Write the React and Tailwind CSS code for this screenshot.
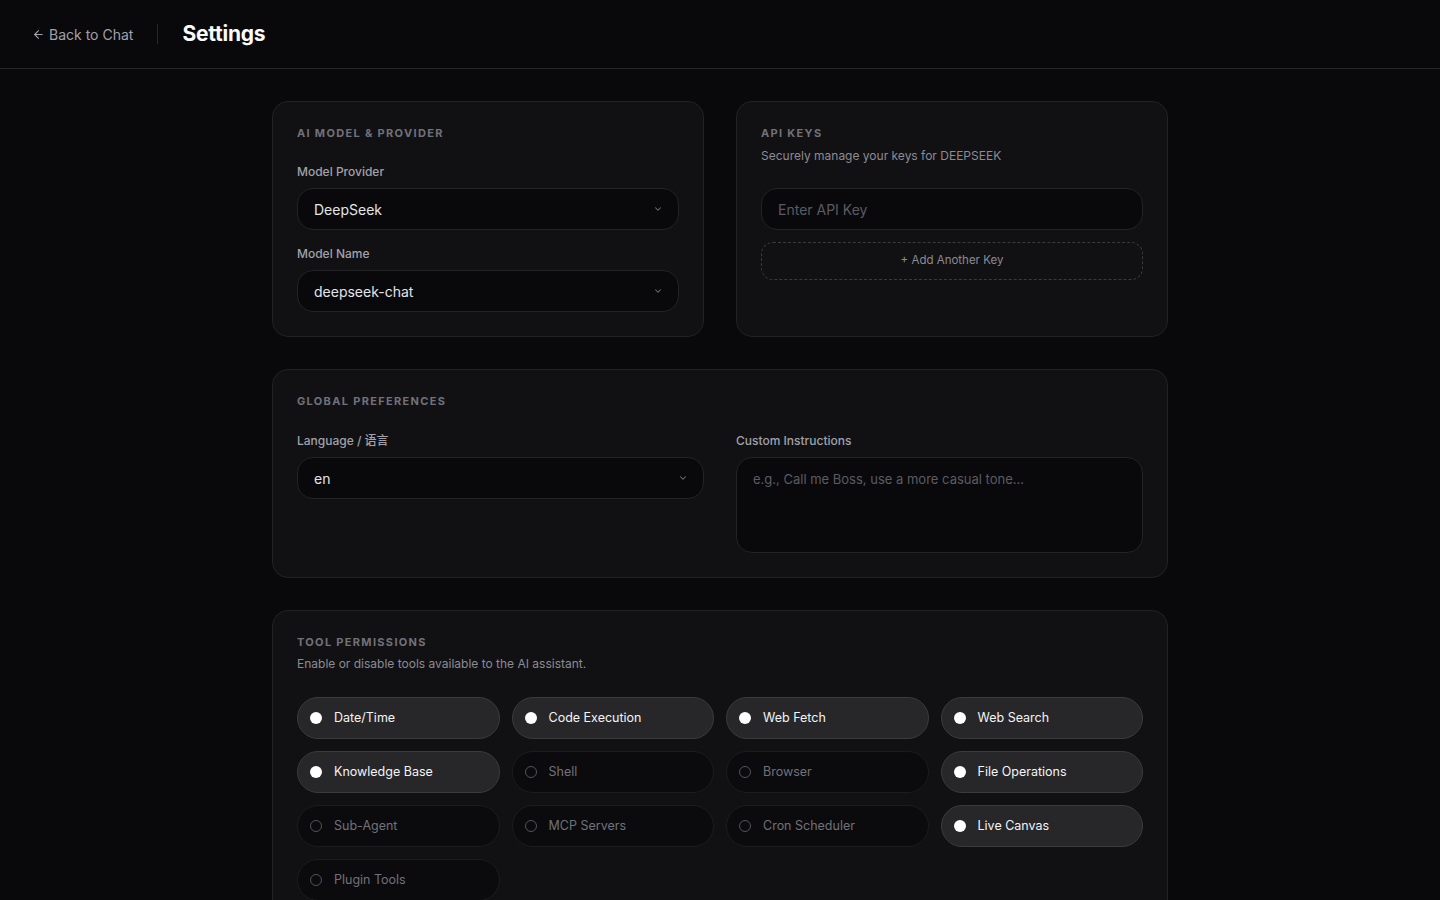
import React from "react";

const font = { fontFamily: "Inter, 'Noto Sans CJK SC', sans-serif" };

function Chevron() {
  return (
    <svg width="10" height="10" viewBox="0 0 24 24" fill="none" stroke="#71717a" strokeWidth="2.5" strokeLinecap="round" strokeLinejoin="round">
      <path d="m6 9 6 6 6-6" />
    </svg>
  );
}

function Select({ value }) {
  return (
    <div className="flex h-[42px] items-center justify-between rounded-2xl border border-[#232326] bg-[#09090b] pl-4 pr-[15px] text-[14px] text-[#e4e4e7]">
      <span>{value}</span>
      <Chevron />
    </div>
  );
}

function Heading({ children }) {
  return <h2 className="text-[11px] font-bold uppercase leading-4 tracking-[0.12em] text-[#71717a]">{children}</h2>;
}

function Label({ children }) {
  return <div className="mb-[7px] text-[12px] font-medium leading-[18px] text-[#a1a1aa]">{children}</div>;
}

const tools = [
  ["Date/Time", true],
  ["Code Execution", true],
  ["Web Fetch", true],
  ["Web Search", true],
  ["Knowledge Base", true],
  ["Shell", false],
  ["Browser", false],
  ["File Operations", true],
  ["Sub-Agent", false],
  ["MCP Servers", false],
  ["Cron Scheduler", false],
  ["Live Canvas", true],
  ["Plugin Tools", false],
];

function Tool({ name, on }) {
  return (
    <div
      className={
        on
          ? "flex h-[42px] items-center gap-3 rounded-full border border-[#3a3a3f] bg-[#27272a] px-3 text-[12.5px] font-normal text-[#f4f4f5]"
          : "flex h-[42px] items-center gap-3 rounded-full border border-[#1c1c1f] bg-[#0b0b0d] px-3 text-[12.5px] font-normal text-[#71717a]"
      }
    >
      {on ? (
        <span className="h-[12px] w-[12px] shrink-0 rounded-full bg-white" />
      ) : (
        <span className="h-[12px] w-[12px] shrink-0 rounded-full border border-[#52525b]" />
      )}
      <span>{name}</span>
    </div>
  );
}

export default function App() {
  return (
    <div className="min-h-screen bg-[#09090b] text-white" style={font}>
      <header className="flex h-[69px] items-center border-b border-[#27272a] px-8">
        <div className="flex items-center gap-[4px] text-[14px] text-[#a1a1aa]">
          <svg width="13" height="13" viewBox="0 0 24 24" fill="none" stroke="#a1a1aa" strokeWidth="2" strokeLinecap="round" strokeLinejoin="round">
            <path d="M19 12H5" />
            <path d="m12 19-7-7 7-7" />
          </svg>
          <span>Back to Chat</span>
        </div>
        <div className="mx-6 h-5 w-px bg-[#27272a]" />
        <h1 className="text-[21px] font-bold tracking-[-0.01em] text-[#fafafa]">Settings</h1>
      </header>

      <main className="mx-auto flex max-w-[896px] flex-col gap-8 pt-8">
        <div className="grid grid-cols-2 gap-8">
          <section className="h-[236px] rounded-2xl border border-[#222225] bg-[#111113] px-6 pt-[23px]">
            <Heading>AI Model &amp; Provider</Heading>
            <div className="mt-[22px]">
              <Label>Model Provider</Label>
              <Select value="DeepSeek" />
            </div>
            <div className="mt-[15px]">
              <Label>Model Name</Label>
              <Select value="deepseek-chat" />
            </div>
          </section>
          <section className="h-[236px] rounded-2xl border border-[#222225] bg-[#111113] px-6 pt-[23px]">
            <Heading>API Keys</Heading>
            <p className="mt-[6px] text-[12px] leading-[18px] text-[#8b8b93]">Securely manage your keys for DEEPSEEK</p>
            <div className="mt-[23px] flex h-[42px] items-center rounded-2xl border border-[#232326] bg-[#09090b] px-4 text-[14px] text-[#5b5b63]">
              Enter API Key
            </div>
            <div className="mt-3 flex h-[38px] items-center justify-center rounded-xl border border-dashed border-[#3a3a3f] text-[11.5px] text-[#8b8b93]">
              + Add Another Key
            </div>
          </section>
        </div>

        <section className="h-[209px] rounded-2xl border border-[#222225] bg-[#111113] px-6 pt-[23px]">
          <Heading>Global Preferences</Heading>
          <div className="mt-[23px] grid grid-cols-2 gap-8">
            <div>
              <Label>Language / 语言</Label>
              <Select value="en" />
            </div>
            <div>
              <Label>Custom Instructions</Label>
              <div className="h-[96px] rounded-2xl border border-[#232326] bg-[#09090b] px-4 pt-[12px] text-[13px] text-[#5b5b63]">
                e.g., Call me Boss, use a more casual tone...
              </div>
            </div>
          </div>
        </section>

        <section className="rounded-2xl border border-[#222225] bg-[#111113] px-6 pb-8 pt-[23px]">
          <Heading>Tool Permissions</Heading>
          <p className="mt-[5px] text-[12px] leading-[18px] text-[#8b8b93]">Enable or disable tools available to the AI assistant.</p>
          <div className="mt-[24px] grid grid-cols-4 gap-3">
            {tools.map(([n, on]) => (
              <Tool key={n} name={n} on={on} />
            ))}
          </div>
        </section>
      </main>
    </div>
  );
}
